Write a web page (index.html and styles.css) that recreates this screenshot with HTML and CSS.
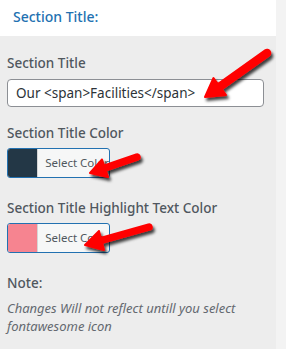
FILE: index.html
```html
<!DOCTYPE html>
<html lang="en">
<head>
    <meta charset="UTF-8">
    <meta name="viewport" content="width=device-width, initial-scale=1.0">
    <title>Section Title</title>
    <link rel="stylesheet" href="styles.css">
</head>
<body>
    <div class="page">
        <div class="panel">
            <div class="panel-header">Section Title:</div>
            <div class="panel-body">
                <div class="field">
                    <label class="field-label">Section Title</label>
                    <input type="text" class="text-input" value="Our <span>Facilities</span>">
                </div>

                <div class="field color-field">
                    <label class="field-label">Section Title Color</label>
                    <button class="color-button">
                        <span class="swatch swatch-dark"></span>
                        <span class="color-text">Select Color</span>
                    </button>
                </div>

                <div class="field color-field">
                    <label class="field-label">Section Title Highlight Text Color</label>
                    <button class="color-button">
                        <span class="swatch swatch-pink"></span>
                        <span class="color-text">Select Color</span>
                    </button>
                </div>

                <div class="note">
                    <div class="note-title">Note:</div>
                    <p class="note-text">Changes Will not reflect untill you select fontawesome icon</p>
                </div>
            </div>
        </div>
        <div class="side-strip"></div>
    </div>

    <!-- red annotation arrows drawn over the panel -->
    <svg class="arrows" width="286" height="349" viewBox="0 0 286 349">
        <defs>
            <filter id="shadow" x="-20%" y="-20%" width="160%" height="160%">
                <feDropShadow dx="2" dy="3" stdDeviation="1.6" flood-color="#000" flood-opacity="0.75"/>
            </filter>
        </defs>
        <g filter="url(#shadow)" fill="#f00" stroke="#f00" stroke-linecap="round" stroke-linejoin="round">
            <line x1="267" y1="53" x2="220" y2="86.5" stroke-width="8.5"/>
            <polygon points="205,97 226,95 213.5,78" stroke-width="2"/>

            <line x1="137" y1="157" x2="105" y2="168" stroke-width="7.5"/>
            <polygon points="90,173 108,177 102,159.5" stroke-width="2"/>

            <line x1="149" y1="227" x2="101" y2="240.5" stroke-width="7.5"/>
            <polygon points="85,245 104,250 99,231" stroke-width="2"/>
        </g>
    </svg>
</body>
</html>
```

FILE: styles.css
```css
body {
    margin: 0;
    font-family: "Noto Sans", "Open Sans", sans-serif;
    background-color: #f3f3f3;
    position: relative;
}
.page {
    display: flex;
    height: 349px;
    overflow: hidden;
}
.panel {
    width: 276px;
    background-color: #ededed;
}
.side-strip {
    flex: 1;
    background-color: #f3f3f3;
}
.panel-header {
    height: 36px;
    line-height: 34px;
    padding-left: 13px;
    background-color: #fff;
    color: #2271b1;
    font-size: 14px;
    font-weight: 500;
}
.panel-body {
    padding: 17px 12px 0 7px;
}
.field {
    margin-bottom: 16px;
}
.color-field {
    margin-bottom: 20px;
}
.field-label {
    display: block;
    font-size: 13.5px;
    line-height: 20px;
    font-weight: 500;
    color: #50575e;
    margin-bottom: 6px;
}
.color-field .field-label {
    margin-bottom: 5px;
}
.text-input {
    box-sizing: border-box;
    width: 257px;
    height: 28px;
    padding: 0 8px;
    border: 1px solid #8c8f94;
    border-radius: 4px;
    background-color: #fff;
    color: #2c3338;
    font-family: inherit;
    font-size: 13.5px;
}
.color-button {
    display: flex;
    box-sizing: border-box;
    width: 103px;
    height: 30px;
    padding: 0;
    border: 1px solid #2271b1;
    border-radius: 3px;
    background-color: #f6f7f7;
    overflow: hidden;
    font-family: inherit;
    cursor: pointer;
}
.swatch {
    width: 30px;
    height: 100%;
    border-right: 1px solid #d5d5d5;
}
.swatch-dark {
    background-color: #233746;
}
.swatch-pink {
    background-color: #f68490;
}
.color-text {
    padding-left: 7px;
    line-height: 28px;
    font-size: 11.5px;
    color: #50575e;
    white-space: nowrap;
}
.note-title {
    font-size: 13.5px;
    line-height: 20px;
    font-weight: 500;
    color: #50575e;
}
.note-text {
    margin: 6px 0 0;
    font-size: 13px;
    line-height: 18px;
    font-style: italic;
    color: #646970;
}
.arrows {
    position: absolute;
    top: 0;
    left: 0;
    pointer-events: none;
}
```
